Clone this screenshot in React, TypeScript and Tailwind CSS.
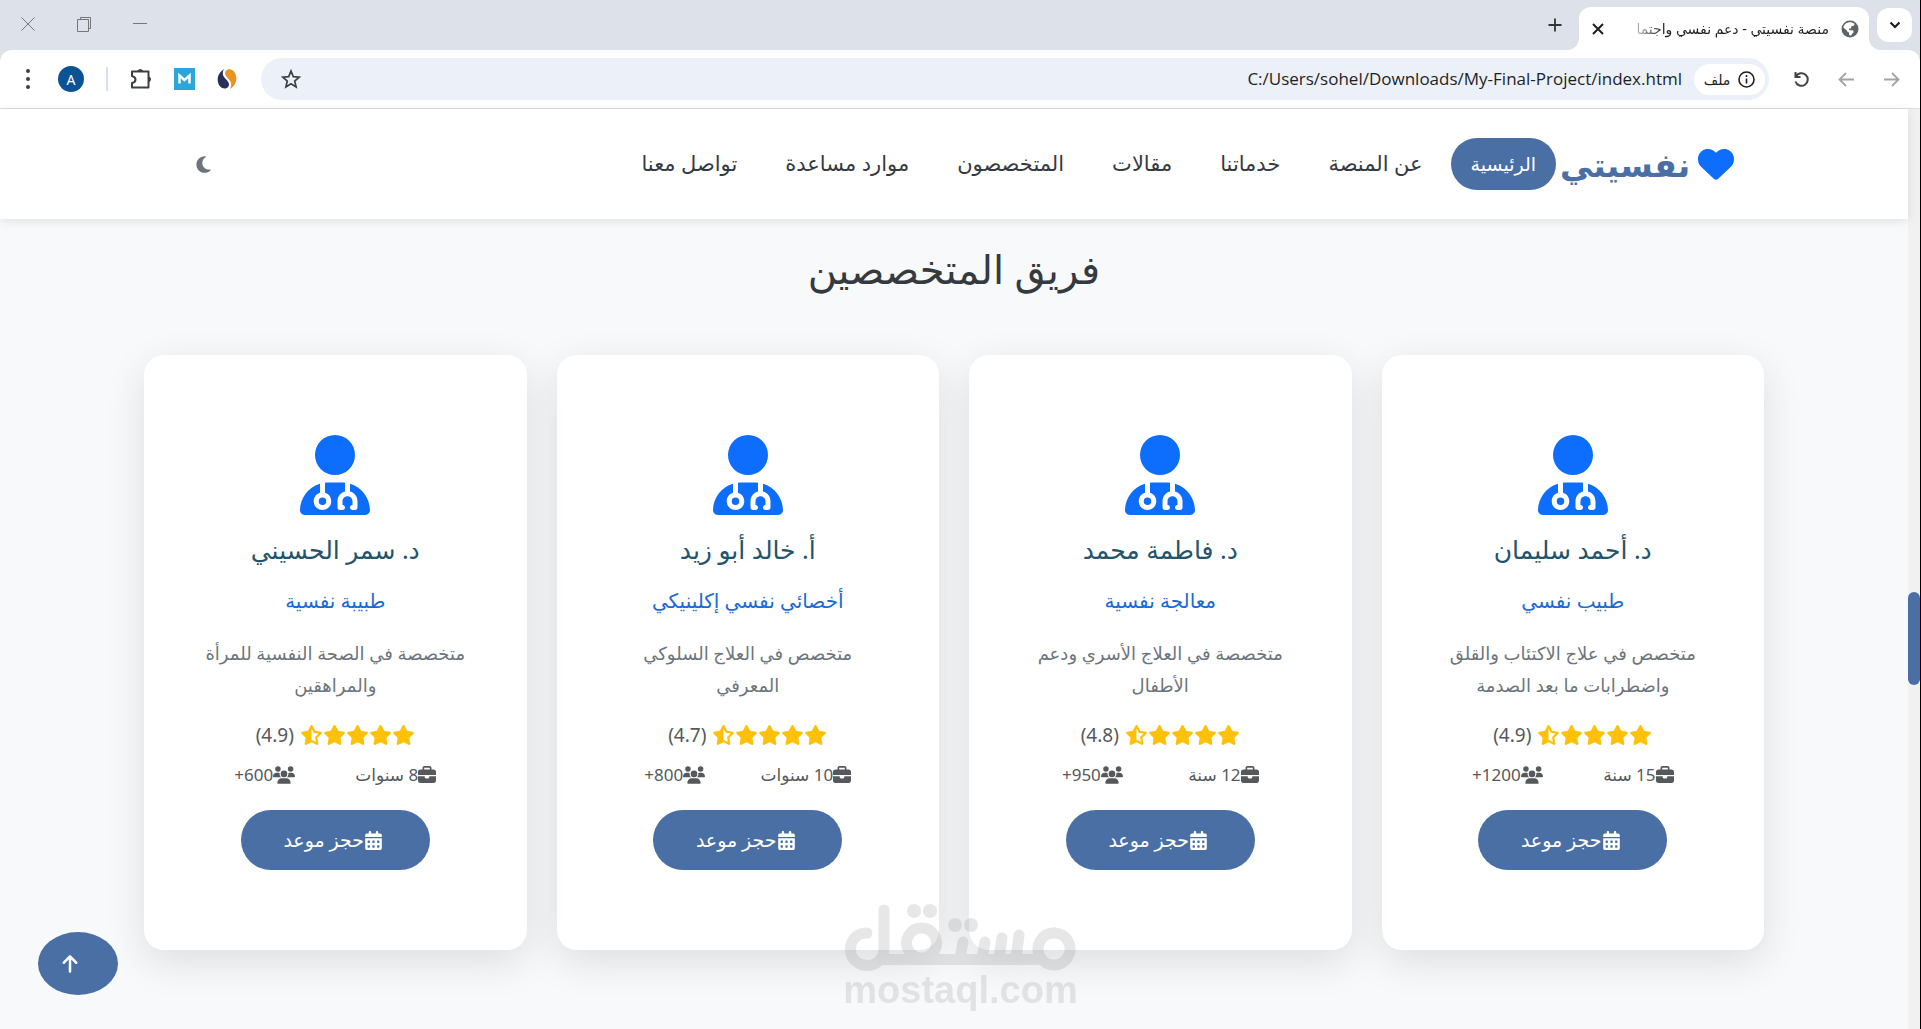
import React from 'react';
import {
  FaArrowUp,
  FaBriefcase,
  FaCalendarDays,
  FaHeart,
  FaMoon,
  FaStar,
  FaStarHalfStroke,
  FaUserDoctor,
  FaUsers,
} from 'react-icons/fa6';

const navItems = ['عن المنصة', 'خدماتنا', 'مقالات', 'المتخصصون', 'موارد مساعدة', 'تواصل معنا'];

const specialists = [
  { name: 'د. أحمد سليمان', role: 'طبيب نفسي', about: ['متخصص في علاج الاكتئاب والقلق', 'واضطرابات ما بعد الصدمة'], rating: '4.9', years: '15 سنة', clients: '1200' },
  { name: 'د. فاطمة محمد', role: 'معالجة نفسية', about: ['متخصصة في العلاج الأسري ودعم', 'الأطفال'], rating: '4.8', years: '12 سنة', clients: '950' },
  { name: 'أ. خالد أبو زيد', role: 'أخصائي نفسي إكلينيكي', about: ['متخصص في العلاج السلوكي', 'المعرفي'], rating: '4.7', years: '10 سنوات', clients: '800' },
  { name: 'د. سمر الحسيني', role: 'طبيبة نفسية', about: ['متخصصة في الصحة النفسية للمرأة', 'والمراهقين'], rating: '4.9', years: '8 سنوات', clients: '600' },
];

function TabStrip() {
  return (
    <div className="flex h-[50px] items-end bg-[#dde1ea]">
      <button aria-label="البحث في علامات التبويب" className="mb-2 ms-2 flex h-[34px] w-[35px] items-center justify-center rounded-xl bg-white text-[#1f1f1f]">
        <svg width="12" height="10" viewBox="0 0 12 10" fill="none" stroke="currentColor" strokeWidth="2.2"><path d="M1.5 2.5 6 7l4.500-4.500" /></svg>
      </button>
      <div className="relative ms-2 flex h-[43px] w-[290px] items-center rounded-t-xl bg-white ps-2.5">
        <svg className="absolute -right-3 bottom-0" width="12" height="12" viewBox="0 0 12 12"><path d="M0 0v12h12A12 12 0 0 1 0 0z" fill="#fff" /></svg>
        <svg className="absolute -left-3 bottom-0" width="12" height="12" viewBox="0 0 12 12"><path d="M12 0v12H0A12 12 0 0 0 12 0z" fill="#fff" /></svg>
        <svg width="18" height="18" viewBox="0 0 18 18">
          <circle cx="9" cy="9" r="8.500" fill="#5f6368" />
          <path d="M9 2.200c2 0 3.400.6 4.600 1.800-.3 1.400-1 2-2.300 2-.8 0-1 .5-1 1.200 0 .9-.5 1.300-1.500 1.300-.6 0-.9.4-.9 1 0 .5.4.8 1 .8h2.200c1 0 1.500.7 1.500 1.500 0 .9-.6 1.300-1.200 1.700-.5.3-.7.8-.7 1.500-.6.400-1.100.5-1.900.5-.5-.5-.8-1.100-.8-2 0-1-.5-1.400-1.300-1.700-.7-.3-1-.8-1-1.600L2.300 7.500C2.900 4.400 5.600 2.200 9 2.200z" fill="#fff" />
        </svg>
        <div className="ms-3 whitespace-nowrap bg-linear-to-l from-[#1f1f1f] from-85% to-[#1f1f1f]/30 bg-clip-text text-[14px] leading-8 text-transparent">
          منصة نفسيتي - دعم نفسي واجتما
        </div>
        <button aria-label="إغلاق علامة التبويب" className="ms-auto me-3 text-[#1f1f1f]">
          <svg width="14" height="14" viewBox="0 0 14 14" stroke="currentColor" strokeWidth="2"><path d="m2 2 10 10M12 2 2 12" /></svg>
        </button>
      </div>
      <button aria-label="علامة تبويب جديدة" className="mb-[17px] ms-4 text-[#333]">
        <svg width="16" height="16" viewBox="0 0 16 16" stroke="currentColor" strokeWidth="1.800"><path d="M8 1.500v13M1.500 8h13" /></svg>
      </button>
      <div className="mb-[18px] ms-auto me-5 flex items-center gap-10 text-[#777]">
        <button aria-label="تصغير"><svg width="16" height="16" viewBox="0 0 16 16" stroke="currentColor"><path d="M1 7.500h14" /></svg></button>
        <button aria-label="استعادة"><svg width="16" height="16" viewBox="0 0 16 16" fill="none" stroke="currentColor"><path d="M1.500 3.500h11v12h-11zM4.500 3.500v-2h10v11h-2" /></svg></button>
        <button aria-label="إغلاق"><svg width="16" height="16" viewBox="0 0 16 16" stroke="currentColor"><path d="m1.500 1.500 13 13M14.500 1.500l-13 13" /></svg></button>
      </div>
    </div>
  );
}

function Toolbar() {
  return (
    <div className="bg-[#dde1ea]">
      <div className="flex h-[59px] items-center rounded-t-xl border-b border-[#dcdfe3] bg-white">
        <div className="flex items-center gap-7 ps-5">
          <button aria-label="رجوع" className="text-[#a2a4a6]">
            <svg width="17" height="17" viewBox="0 0 17 17" fill="none" stroke="currentColor" strokeWidth="1.800"><path d="M1 8.500h14M9 2l6.500 6.500L9 15" /></svg>
          </button>
          <button aria-label="تقدّم" className="text-[#a2a4a6]">
            <svg width="17" height="17" viewBox="0 0 17 17" fill="none" stroke="currentColor" strokeWidth="1.800"><path d="M16 8.500H2M8 2 1.500 8.500 8 15" /></svg>
          </button>
          <button aria-label="إعادة تحميل" className="text-[#444]">
            <svg width="17" height="17" viewBox="0 0 17 17" fill="none" stroke="currentColor" strokeWidth="2"><path d="M2.500 1v5h5M2.800 5.800A6.300 6.300 0 1 1 2.500 10.500" /></svg>
          </button>
        </div>
        <div className="mx-6 flex h-[42px] flex-1 items-center rounded-full bg-[#ebf0f9] px-1">
          <button className="flex h-[31px] w-[71px] items-center justify-center gap-2 rounded-full bg-white text-[14px] font-medium text-[#1f1f1f]">
            <svg width="17" height="17" viewBox="0 0 17 17" fill="none" stroke="currentColor" strokeWidth="1.600"><circle cx="8.500" cy="8.500" r="7.500" /><path d="M8.500 7.500v5M8.500 4v2" /></svg>
            ملف
          </button>
          <input
            aria-label="شريط العناوين"
            dir="ltr"
            readOnly
            value="C:/Users/sohel/Downloads/My-Final-Project/index.html"
            className="mx-3 min-w-0 flex-1 bg-transparent text-right font-['Open_Sans','Noto_Sans',sans-serif] text-[17px] text-[#1f1f1f] outline-none"
          />
          <button aria-label="إضافة إشارة مرجعية" className="me-4 text-[#3c4043]">
            <svg width="20" height="20" viewBox="0 0 20 20" fill="none" stroke="currentColor" strokeWidth="1.700"><path d="m10 2 2.300 5.600 6 .5-4.600 3.900 1.400 5.900L10 14.800l-5.100 3.100 1.400-5.900-4.600-3.900 6-.5z" /></svg>
          </button>
        </div>
        <div className="flex items-center gap-[22px] pe-5">
          <svg width="20" height="22" viewBox="0 0 20 22">
            <path d="M7 1C2.500 4 .5 8 .7 12c.2 5 3.500 8.500 7 8.500 3 0 5-2.500 4-5.500C10.800 12 6 9.500 5.800 6 5.700 4 6 2.500 7 1z" fill="#27305b" />
            <path d="M13 21c4.500-2.500 6.500-7 6.300-11C19 5 16 1.300 12.500 1.300 9.500 1.300 7.700 3.500 8.200 6.200c.6 3 5 5 5.800 9 .4 2 0 4-1 5.800z" fill="#e8941e" />
          </svg>
          <svg width="21" height="22" viewBox="0 0 21 22"><path d="M0 0h21v22H0z" fill="#2ca5dc" /><path d="M5.500 15.500V7.500l5 4.500 5-4.500v8" fill="none" stroke="#fff" strokeWidth="2.500" /></svg>
          <svg width="22" height="22" viewBox="0 0 22 22" fill="none" stroke="#3c4043" strokeWidth="2">
            <path d="M2 3.500h16.500v16H2v-4.500c3-.5 3.500-2 3.500-3.500S4 8.500 2 8z" strokeLinejoin="round" />
            <path d="M8.500 3a2 2 0 0 1 3.500 0zM19 9.500a2 2 0 0 1 0 3.500z" fill="#3c4043" />
          </svg>
          <div className="h-6 w-0.5 bg-[#d5def2]" />
          <button aria-label="الملف الشخصي" className="flex h-[26px] w-[26px] items-center justify-center rounded-full bg-[#0b5394] text-[14px] text-white">A</button>
          <button aria-label="القائمة" className="text-[#3c4043]">
            <svg width="16" height="22" viewBox="0 0 16 22" fill="currentColor"><circle cx="8" cy="3" r="2" /><circle cx="8" cy="11" r="2" /><circle cx="8" cy="19" r="2" /></svg>
          </button>
        </div>
      </div>
    </div>
  );
}

function SiteHeader() {
  return (
    <header className="relative z-10 flex h-[110px] items-center bg-white px-[174px] shadow-[0_2px_10px_rgba(0,0,0,0.1)]">
      <a href="#home" className="flex items-center gap-2 font-bold text-[#4a6fa5]">
        <FaHeart className="text-[36px] text-[#0d6efd]" />
        <span className="flex w-[130px] justify-center whitespace-nowrap text-[33px] leading-none">نفسيتي</span>
      </a>
      <nav className="ms-1 flex gap-2 text-[21px] font-medium text-[#343a40]">
        <a href="#home" className="flex h-[52px] items-center whitespace-nowrap rounded-full bg-[#4a6fa5] px-5 text-[19px] text-white">
          الرئيسية
        </a>
        {navItems.map((item) => (
          <a key={item} href="#section" className="flex h-[52px] items-center whitespace-nowrap px-5">
            {item}
          </a>
        ))}
      </nav>
      <button aria-label="الوضع الليلي" className="ms-auto me-5 text-[19px] text-[#6c757d]">
        <FaMoon />
      </button>
    </header>
  );
}

function SpecialistCard({ person }: { person: (typeof specialists)[number] }) {
  return (
    <article className="flex flex-col items-center rounded-[20px] bg-white py-20 text-center shadow-[0_12px_40px_rgba(0,0,0,0.11)]">
      <FaUserDoctor className="h-20 w-[70px] text-[#0d6efd]" />
      <h3 className="mt-3.5 text-[25px] leading-10 text-[#22546b]">{person.name}</h3>
      <p className="mt-4 text-[20px] font-medium leading-8 text-[#1a6ad8]">{person.role}</p>
      <p className="mt-5 text-[18px] leading-8 text-[#6c757d]">
        {person.about[0]}
        <br />
        {person.about[1]}
      </p>
      <div className="mt-[18px] flex h-8 items-center gap-1.5">
        <span className="flex text-[20px] text-[#ffc107]" role="img" aria-label={person.rating}>
          <FaStar className="w-[23px]" />
          <FaStar className="w-[23px]" />
          <FaStar className="w-[23px]" />
          <FaStar className="w-[23px]" />
          <FaStarHalfStroke className="w-[23px]" />
        </span>
        <span className="text-[19px] text-[#55595c]">({person.rating})</span>
      </div>
      <div className="mt-2 flex h-8 w-[262px] items-center justify-around whitespace-nowrap text-[17px] text-[#55595c]">
        <span className="flex items-center"><FaBriefcase className="text-[18px]" />{person.years}</span>
        <span className="flex items-center"><FaUsers className="w-[22px] text-[18px]" /><bdi dir="ltr">+{person.clients}</bdi></span>
      </div>
      <button className="mt-[19px] flex h-[60px] w-[189px] items-center justify-center rounded-full bg-[#4a6fa5] pe-2 text-[19px] font-medium text-white">
        <FaCalendarDays className="ms-3" />
        حجز موعد
      </button>
    </article>
  );
}

function Watermark() {
  return (
    <div className="pointer-events-none absolute bottom-[22px] left-[845px] w-[231px] text-[#8a8c8e] opacity-20" dir="ltr">
      <svg width="231" height="68" viewBox="0 0 231 68" fill="none" stroke="currentColor" strokeWidth="11" strokeLinecap="round" aria-label="مستقل" role="img">
        <path d="M22 29C12 29 5.500 36 5.500 45.500S13 61.500 22 61.500 39 55 39 45V6M36 55.500H192M76.500 24a15 15 0 1 0 .1 0M209 29a16 16 0 1 0 .1 0M118 38l-3 16M140 38l-3 16M157 34l-3 20M174 31l-3 23" />
        <path d="M69 7h.1M85 7h.1M110 21h.1M126 21h.1" strokeWidth="14" />
      </svg>
      <div className="flex justify-center font-['Liberation_Sans',sans-serif] text-[38px] font-bold leading-9">mostaql.com</div>
    </div>
  );
}

export default function App() {
  return (
    <div dir="rtl" className="relative flex min-h-screen flex-col overflow-hidden border-r border-black bg-white font-['Noto_Sans','DejaVu_Sans',sans-serif]">
      <TabStrip />
      <Toolbar />
      <div className="flex flex-1">
        <div className="w-3 shrink-0 bg-[#f1f1f1] pt-[483px]">
          <div className="h-[93px] rounded-full bg-[#4a6fa5]" />
        </div>
        <div className="min-w-0 flex-1 bg-[#f8f9fa]">
          <SiteHeader />
          <main className="px-36 pb-20 pt-5">
            <h2 className="text-center text-[40px] leading-[60px] text-[#343a40]">فريق المتخصصين</h2>
            <div className="mt-14 grid grid-cols-4 gap-[30px]">
              {specialists.map((person) => (
                <SpecialistCard key={person.name} person={person} />
              ))}
            </div>
          </main>
        </div>
      </div>
      <button aria-label="العودة إلى الأعلى" className="absolute bottom-[35px] left-[38px] flex h-[63px] w-20 items-center justify-center rounded-[50%] bg-[#4a6fa5] ps-4 text-[20px] text-white">
        <FaArrowUp />
      </button>
      <Watermark />
    </div>
  );
}
